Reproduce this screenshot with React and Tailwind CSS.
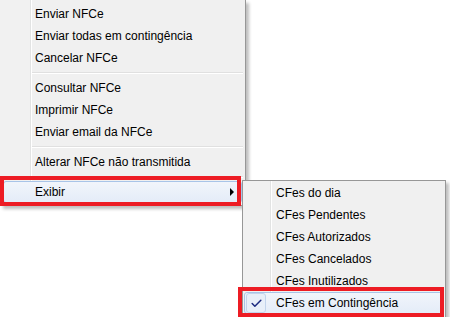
import { Check } from 'lucide-react'

const gutterBg =
  'bg-[linear-gradient(to_right,#f1f1f1_30px,#e2e3e3_30px,#e2e3e3_31px,#ffffff_31px,#ffffff_32px,#f0f0f0_32px)]'
const subGutterBg =
  'bg-[linear-gradient(to_right,#f1f1f1_27px,#e2e3e3_27px,#e2e3e3_28px,#ffffff_28px,#ffffff_29px,#f0f0f0_29px)]'

function Item({ label }) {
  return <div className="h-[22px] pl-[35px] text-[12px] leading-[22px] text-black">{label}</div>
}

function Separator() {
  return (
    <div className="flex h-[8px] flex-col justify-center pl-[32px] pr-[2px]">
      <div className="h-px bg-[#e0e0e0]" />
      <div className="h-px bg-white" />
    </div>
  )
}

function SubItem({ label, checked }) {
  if (checked) {
    return (
      <div className="mx-[1px] flex h-[22px] items-center rounded-[3px] border border-[#a8c4e8] bg-[linear-gradient(to_bottom,#f1f5fb,#e4ecf8)]">
        <div className="ml-px flex h-[20px] w-[20px] items-center justify-center rounded-[3px] border border-[#c3d4ec] bg-[#e8eff9]">
          <Check className="size-[13px] text-[#1c2b80]" strokeWidth={2.8} />
        </div>
        <span className="ml-[10px] text-[12px] leading-[22px] text-black">{label}</span>
      </div>
    )
  }
  return <div className="h-[22px] pl-[33px] text-[12px] leading-[22px] text-black">{label}</div>
}

export default function App() {
  return (
    <div className="relative h-[317px] w-[450px] overflow-hidden bg-white font-['Liberation_Sans',Arial,sans-serif]">
      <div
        className={`w-[246px] border-r border-b border-[#979797] pt-[3px] pb-[2px] shadow-[3px_3px_3px_rgba(0,0,0,0.25)] ${gutterBg}`}
      >
        <Item label="Enviar NFCe" />
        <Item label="Enviar todas em contingência" />
        <Item label="Cancelar NFCe" />
        <Separator />
        <Item label="Consultar NFCe" />
        <Item label="Imprimir NFCe" />
        <Item label="Enviar email da NFCe" />
        <Separator />
        <Item label="Alterar NFCe não transmitida" />
        <Separator />
        <div className="mx-[3px] flex h-[22px] items-center rounded-[3px] border border-[#a8c4e8] bg-[linear-gradient(to_bottom,#f1f5fb,#e4ecf8)] pl-[31px] pr-[7px] text-[12px] text-black">
          <span className="flex-1">Exibir</span>
          <span className="h-0 w-0 border-y-[4px] border-l-[4px] border-y-transparent border-l-black" />
        </div>
      </div>

      <div
        className={`absolute left-[242px] top-[180px] w-[204px] border border-[#979797] pt-px pb-[3px] shadow-[3px_3px_3px_rgba(0,0,0,0.25)] ${subGutterBg}`}
      >
        <SubItem label="CFes do dia" />
        <SubItem label="CFes Pendentes" />
        <SubItem label="CFes Autorizados" />
        <SubItem label="CFes Cancelados" />
        <SubItem label="CFes Inutilizados" />
        <SubItem label="CFes em Contingência" checked />
      </div>

      <div className="pointer-events-none absolute left-0 top-[176px] h-[30px] w-[241px] border-[4px] border-[#ed1c24]" />
      <div className="pointer-events-none absolute left-[238px] top-[287px] h-[30px] w-[206px] border-[4px] border-[#ed1c24]" />
    </div>
  )
}
